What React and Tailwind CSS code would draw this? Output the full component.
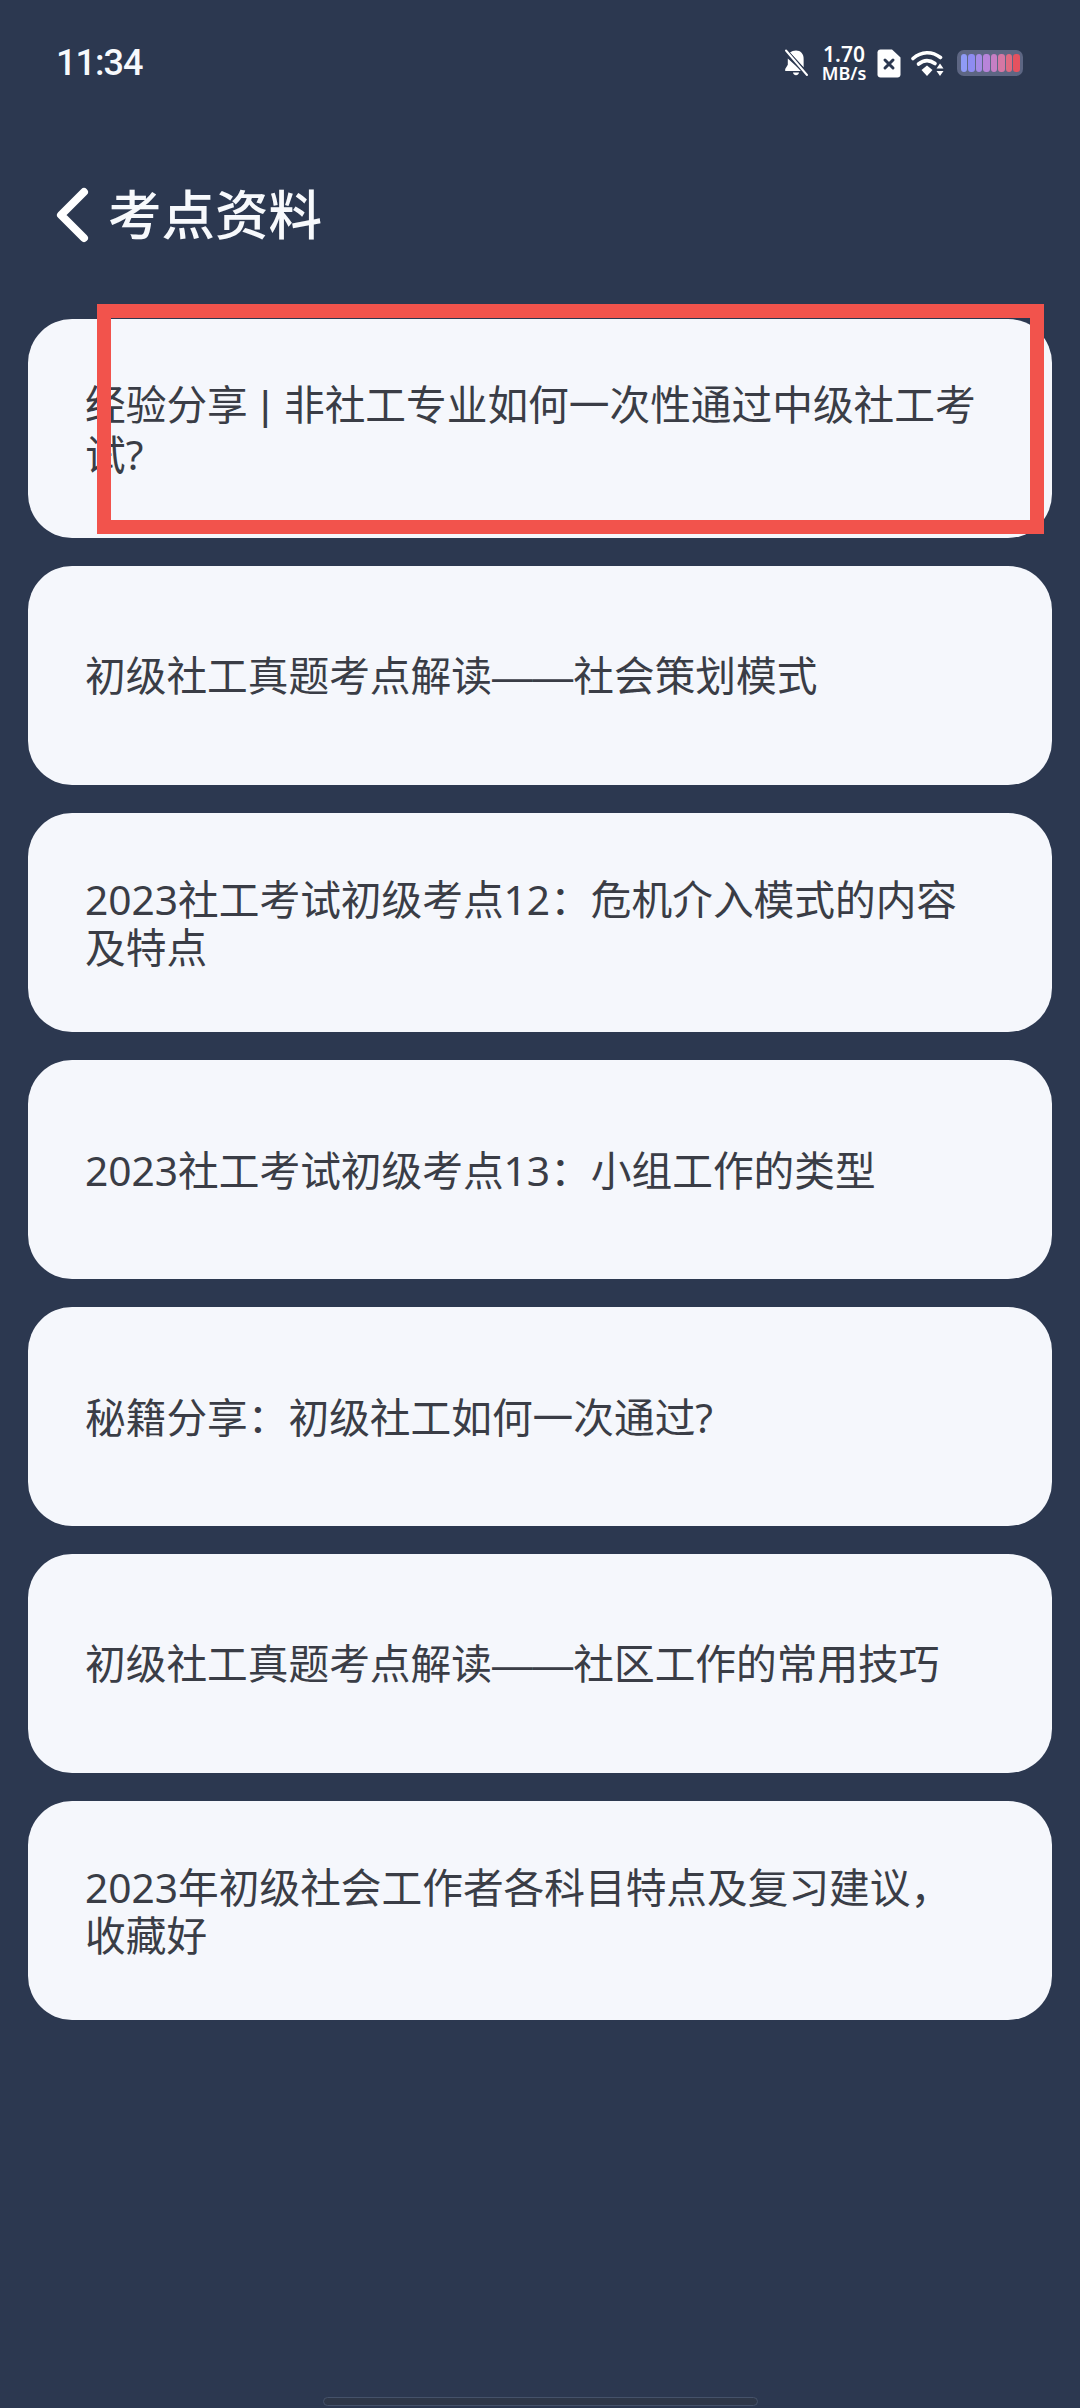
import React from 'react';

const Dash = () => <span className="font-['Liberation_Sans',sans-serif]">——</span>;

const items = [
    <>经验分享<span className="font-['Liberation_Sans',sans-serif] tracking-[1px]"> | </span>非社工专业如何一次性通过中级社工考试?</>,
    <>初级社工真题考点解读<Dash />社会策划模式</>,
    '2023社工考试初级考点12：危机介入模式的内容及特点',
    '2023社工考试初级考点13：小组工作的类型',
    '秘籍分享：初级社工如何一次通过?',
    <>初级社工真题考点解读<Dash />社区工作的常用技巧</>,
    '2023年初级社会工作者各科目特点及复习建议，收藏好',
];

const batteryBars = [
    'bg-[#8f9bf6]',
    'bg-[#8e8cf2]',
    'bg-[#a58be6]',
    'bg-[#b884da]',
    'bg-[#c67fc4]',
    'bg-[#d577a4]',
    'bg-[#df6a80]',
    'bg-[#e5525f]',
];

function BellOff() {
    return (
        <svg width="26" height="28" viewBox="0 0 26 28" fill="none">
            <path d="M7 3.500 20.600 18.600V9.500c0-4.600-3-8-7.600-8-2.400 0-4.500 0.800-6 2z" fill="#ffffff" />
            <path d="M4.800 9.500v6.200L2.200 20v2h16.500z" fill="#ffffff" />
            <path d="M10 23.500h6c-0.300 1.700-1.500 2.800-3 2.800s-2.700-1.100-3-2.800z" fill="#ffffff" />
            <path d="M2.500 2 24.500 26" stroke="#2c3850" strokeWidth="4.500" />
            <path d="M3 1.500 24 26" stroke="#ffffff" strokeWidth="2" strokeLinecap="round" />
        </svg>
    );
}

function SimIcon() {
    return (
        <svg width="24" height="29" viewBox="0 0 24 29">
            <path d="M3.500 0.500h11.500l8.500 8v17c0 1.700-1.300 3-3 3h-17c-1.700 0-3-1.300-3-3v-22c0-1.700 1.300-3 3-3z" fill="#ffffff" />
            <path d="M8 11l8 8M16 11l-8 8" stroke="#2c3850" strokeWidth="3" strokeLinecap="round" />
        </svg>
    );
}

function WifiIcon() {
    return (
        <svg width="35" height="28" viewBox="0 0 35 28" fill="none">
            <path d="M2 9.500C10.500 2 21 2 29.500 8.500" stroke="#ffffff" strokeWidth="3.600" strokeLinecap="round" />
            <path d="M7.500 15c5.500-4.500 11-4.500 16.500-.5" stroke="#ffffff" strokeWidth="3.600" strokeLinecap="round" />
            <path d="M10.500 21 16 16.500l5.500 4.500L16 27z" fill="#ffffff" />
            <path d="M29 14.500l3.500 5h-7z" fill="#ffffff" />
            <path d="M25.500 22h7l-3.500 5z" fill="#ffffff" />
        </svg>
    );
}

function StatusIcons() {
    return (
        <div className="flex items-center text-white">
            <BellOff />
            <div className="ml-[12px] flex w-[46px] flex-col items-center font-['Noto_Sans',sans-serif] font-semibold">
                <div className="text-[21px] leading-[20px]">1.70</div>
                <div className="text-[18px] leading-[18px]">MB/s</div>
            </div>
            <div className="ml-[10px] flex">
                <SimIcon />
            </div>
            <div className="ml-[10px] flex">
                <WifiIcon />
            </div>
            <div className="ml-[11px] flex h-[26px] w-[66px] items-center justify-center gap-[1px] rounded-[7px] bg-[#5d6683]">
                {batteryBars.map((color, i) => (
                    <span key={i} className={`h-[18px] w-[6.500px] rounded-[3px] ${color}`}></span>
                ))}
            </div>
        </div>
    );
}

export default function App() {
    return (
        <div className="relative flex h-[2408px] w-[1080px] flex-col overflow-hidden bg-[#2c3850] font-['Noto_Sans','Noto_Sans_CJK_SC',sans-serif]">
            <div className="flex h-[126px] items-center justify-between pl-[56px] pr-[57px]">
                <span className="font-['Roboto',sans-serif] text-[36px] font-medium leading-none tracking-[-1px] text-[#f7f9fc]">11:34</span>
                <StatusIcons />
            </div>

            <div className="flex h-[178px] items-center pl-[53px]">
                <svg width="40" height="60" viewBox="0 0 40 60" fill="none">
                    <path d="M31 7 8 30l23 23" stroke="#ffffff" strokeWidth="8" strokeLinecap="round" strokeLinejoin="round" />
                </svg>
                <h1 className="ml-[15px] text-[53.500px] font-medium leading-none text-[#f7f9fc]">考点资料</h1>
            </div>

            <div className="mx-[28px] mt-[15px] flex flex-col gap-[28px]">
                {items.map((title, i) => (
                    <div key={i} className="flex h-[219px] items-center rounded-[44px] bg-[#f5f7fc] pl-[57px] pr-[70px]">
                        <p className="text-[40.700px] leading-[48px] text-[#3a3d46]">{title}</p>
                    </div>
                ))}
            </div>

            {/* 截图上的红色标注框 */}
            <div className="absolute left-[97px] top-[304px] h-[230px] w-[947px] border-[14px] border-[#f2534c]"></div>

            <div className="mt-auto mb-[2px] h-[9px] w-[435px] self-center rounded-full border border-[#45526a] bg-[#2e3748]"></div>
        </div>
    );
}
